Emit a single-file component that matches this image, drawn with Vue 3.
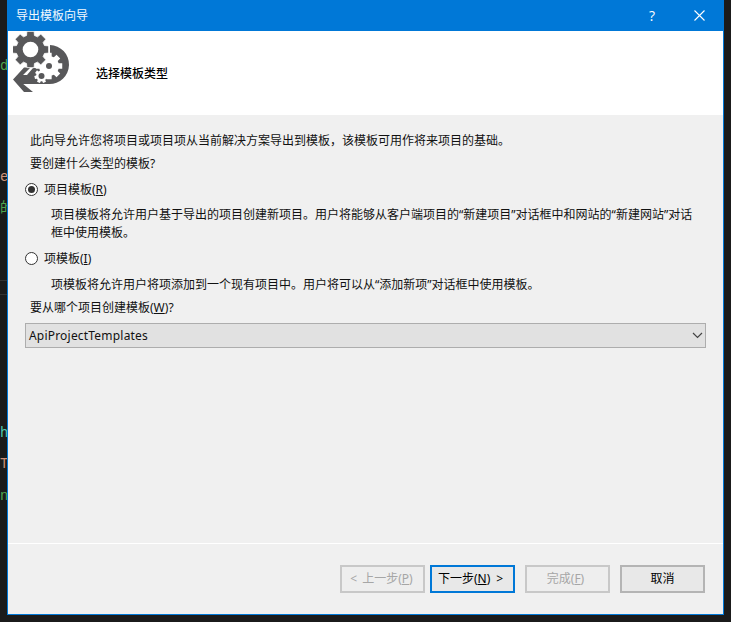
<script setup>
const strip = [
  { text: 'd', top: 59, color: '#4ea64e' },
  { text: 'e', top: 170, color: '#ce9178' },
  { text: '的', top: 201, color: '#4ea64e' },
  { text: 'h', top: 426, color: '#4ec9b0' },
  { text: 'T', top: 457, color: '#ce9178' },
  { text: 'n', top: 489, color: '#4ea64e' }
]

function gear(cx, cy, R, r, teeth) {
  const step = (Math.PI * 2) / teeth
  const pts = []
  for (let i = 0; i < teeth; i++) {
    const a = i * step - Math.PI / 2
    const w = step * 0.25
    const W = step * 0.35
    ;[[r, a - W], [R, a - w], [R, a + w], [r, a + W]].forEach(([rad, t]) => {
      pts.push((cx + rad * Math.cos(t)).toFixed(2) + ' ' + (cy + rad * Math.sin(t)).toFixed(2))
    })
  }
  return 'M' + pts.join('L') + 'Z'
}

const bigGear = gear(17.5, 18.5, 18.5, 14.5, 8)
const midGear = gear(36, 35, 13.5, 10, 8)
const smallGear = gear(28.5, 45, 7.2, 5.4, 7)
</script>

<template>
  <div class="desktop">
    <div class="code-strip">
      <span v-for="g in strip" :key="g.top" class="glyph" :style="{ top: g.top + 'px', color: g.color }">{{ g.text }}</span>
      <span class="rule rule-a"></span>
      <span class="rule rule-b"></span>
    </div>
    <div class="dialog">
      <div class="titlebar">
        <span class="title">导出模板向导</span>
        <span class="help">?</span>
        <svg class="close" width="11" height="11" viewBox="0 0 11 11"><path d="M0.500 0.500L10.500 10.500M10.500 0.500L0.500 10.500" stroke="#fff" stroke-width="1.100" fill="none"/></svg>
      </div>
      <div class="banner">
        <svg class="logo" width="58" height="64" viewBox="0 0 58 64">
          <path fill="#58585a" d="M37 14A19.500 19.500 0 0 1 36 53H8V44H14L20 37H37Z"/>
          <path fill="#58585a" d="M0 48.500L11 36.500H17.500L9 45V52L20 61H11Z"/>
          <path fill="#fff" :d="midGear"/>
          <circle cx="36" cy="35" r="3" fill="#58585a"/>
          <path fill="#fff" :d="smallGear"/>
          <circle cx="28.500" cy="45" r="3" fill="#58585a"/>
          <path fill="#58585a" stroke="#fff" stroke-width="0.800" :d="bigGear"/>
          <circle cx="17.500" cy="18.500" r="7.800" fill="#fff"/>
        </svg>
        <span class="banner-title">选择模板类型</span>
      </div>
      <div class="content">
        <div class="body">
          <p class="line intro">此向导允许您将项目或项目项从当前解决方案导出到模板，该模板可用作将来项目的基础。</p>
          <p class="line ask">要创建什么类型的模板?</p>
          <div class="radio-row first">
            <span class="radio"><span class="dot"></span></span>
            <span class="label">项目模板(<u>R</u>)</span>
          </div>
          <p class="desc d1">项目模板将允许用户基于导出的项目创建新项目。用户将能够从客户端项目的“新建项目”对话框中和网站的“新建网站”对话框中使用模板。</p>
          <div class="radio-row second">
            <span class="radio"></span>
            <span class="label">项模板(<u>I</u>)</span>
          </div>
          <p class="desc d2">项模板将允许用户将项添加到一个现有项目中。用户将可以从“添加新项”对话框中使用模板。</p>
          <p class="line which">要从哪个项目创建模板(<u>W</u>)?</p>
          <div class="select">
            <span class="select-value">ApiProjectTemplates</span>
            <svg width="11" height="7" viewBox="0 0 11 7"><path d="M1 1L5.500 5.500L10 1" stroke="#444" stroke-width="1.200" fill="none"/></svg>
          </div>
        </div>
        <div class="footer">
          <div class="buttons">
            <span class="btn disabled shift-small"><span><span class="lt">&lt;</span>上一步(<u>P</u>)</span></span>
            <span class="btn primary shift"><span>下一步(<u>N</u>)<span class="gt">&gt;</span></span></span>
            <span class="btn disabled gap shift"><span>完成(<u>F</u>)</span></span>
            <span class="btn normal gap">取消</span>
          </div>
        </div>
      </div>
    </div>
  </div>
</template>

<style>
html, body { margin: 0; background: #1b1b1b; }
</style>

<style scoped>
.desktop {
  width: 731px;
  height: 622px;
  display: flex;
  background: #1b1b1b;
  overflow: hidden;
  font-family: "Noto Sans", "Noto Sans CJK SC", sans-serif;
  font-size: 12px;
  color: #111;
}
.code-strip {
  position: relative;
  width: 7px;
  flex: none;
  overflow: hidden;
}
.glyph {
  position: absolute;
  left: 0;
  font-family: "Liberation Mono", "Noto Sans CJK SC", monospace;
  font-size: 14px;
  line-height: 14px;
}
.rule {
  position: absolute;
  left: 0;
  width: 7px;
  height: 1px;
  background: #333;
}
.rule-a { top: 280px; }
.rule-b { top: 294px; }
.dialog {
  width: 717px;
  height: 615px;
  flex: none;
  box-sizing: border-box;
  border: 1px solid #0078d7;
  border-top: 0;
  display: flex;
  flex-direction: column;
  background: #f0f0f0;
}
.titlebar {
  height: 31px;
  flex: none;
  background: #0078d7;
  display: flex;
  align-items: center;
  color: #fff;
}
.title { margin-left: 8px; line-height: 31px; color: #f2f8fd; }
.help { margin-left: auto; font-size: 14px; font-family: "Open Sans", sans-serif; }
.close { margin-left: 39px; margin-right: 18px; }
.banner {
  height: 84px;
  flex: none;
  background: #fff;
  display: flex;
}
.logo { margin-left: 5px; flex: none; }
.banner-title { margin-left: 25px; margin-top: 34px; line-height: 18px; color: #000; font-weight: 500; }
.content {
  flex: 1;
  display: flex;
  flex-direction: column;
}
.body { flex: 1; padding: 17px 17px 0 17px; }
.line { margin: 0; line-height: 18px; }
.ask { margin-top: 5px; margin-left: 5px; }
.intro { margin-left: 5px; }
.which { margin-top: 5px; margin-left: 5px; }
.radio-row { display: flex; align-items: center; height: 18px; }
.first { margin-top: 7px; }
.second { margin-top: 7px; }
.radio {
  width: 11px;
  height: 11px;
  border: 1px solid #333;
  border-radius: 50%;
  background: #fff;
  display: flex;
  align-items: center;
  justify-content: center;
}
.dot { width: 7px; height: 7px; border-radius: 50%; background: #333; }
.label { margin-left: 6px; }
.desc { margin: 0 0 0 26px; line-height: 18px; width: 650px; }
.d1 { margin-top: 8px; }
.d2 { margin-top: 9px; }
.select {
  margin-top: 6px;
  height: 25px;
  width: 681px;
  box-sizing: border-box;
  border: 1px solid #adadad;
  background: #e1e1e1;
  display: flex;
  align-items: center;
  justify-content: space-between;
  padding: 0 2px 0 3px;
}
.select-value { font-size: 12px; letter-spacing: .2px; }
.footer {
  height: 71px;
  flex: none;
  border-top: 1px solid #fff;
  box-sizing: border-box;
  display: flex;
  justify-content: flex-end;
  padding: 21px 18px 0 0;
}
.buttons { display: flex; }
.btn {
  width: 85px;
  height: 28px;
  box-sizing: border-box;
  display: flex;
  align-items: center;
  justify-content: center;
  line-height: 18px;
  white-space: nowrap;
  margin-left: 5px;
}
.shift { padding-right: 4px; }
.shift-small { padding-right: 2px; }
.lt { margin-right: 5px; }
.gt { margin-left: 6px; }
.gap { margin-left: 10px; }
.disabled { border: 2px solid #c8c8c8; background: #eeeeee; color: #a6a6a6; }
.primary { border: 2px solid #0078d7; background: #e8e8e8; color: #000; }
.normal { color: #000; border: 2px solid #b4b4b4; background: #e8e8e8; }
</style>
